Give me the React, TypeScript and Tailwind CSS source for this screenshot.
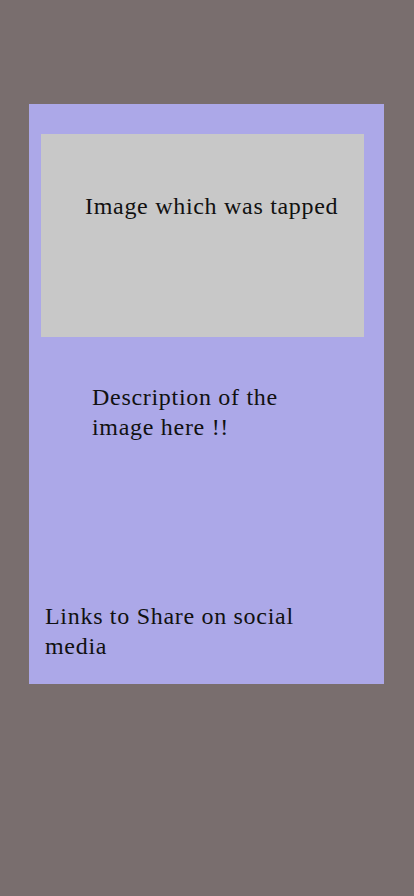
export default function App() {
  return (
    <div className="min-h-[896px] w-full bg-[#796e6e] pt-[104px] pl-[29px] font-['Liberation_Serif',serif] text-[24px] leading-[30px] tracking-[0.7px] text-[#111]">
      <div className="flex h-[580px] w-[355px] flex-col bg-[#aca8e8] pt-[30px]">
        <div className="ml-[12px] h-[203px] w-[323px] bg-[#c8c8c8] pl-[44px] pt-[57px]">
          <p>Image which was tapped</p>
        </div>
        <p className="mt-[45px] ml-[63px] w-[215px]">Description of the image here !!</p>
        <p className="mt-auto mb-[23px] ml-[16px] w-[270px]">Links to Share on social media</p>
      </div>
    </div>
  );
}
